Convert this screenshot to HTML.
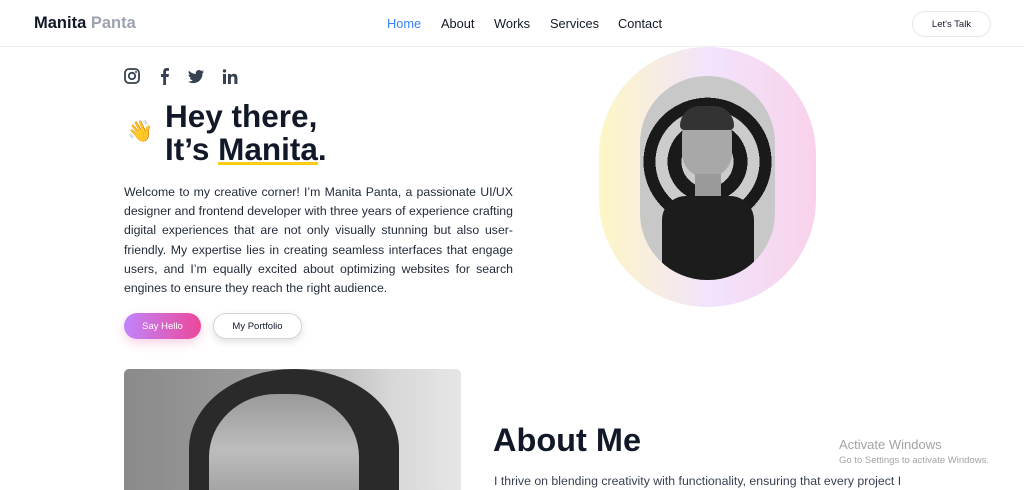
<!DOCTYPE html>
<html><head><meta charset="utf-8"><style>
*{margin:0;padding:0;box-sizing:border-box}
html,body{overflow:hidden}
body{width:1024px;height:490px;overflow:hidden;background:#fff;font-family:"Liberation Sans",Arial,sans-serif;position:relative;color:#111827}
.abs{position:absolute}
.nav{top:0;left:0;width:1024px;height:47px;border-bottom:1px solid #eee}
.logo{left:34px;top:14px;font-size:16.5px;font-weight:bold;color:#111827}
.logo span{color:#9ca3af}
.links a{position:absolute;top:16px;font-size:12.8px;color:#111827;text-decoration:none}
.talk{left:912px;top:11px;width:79px;height:26px;border:1px solid #e5e7eb;border-radius:13px;font-size:9.5px;display:flex;align-items:center;justify-content:center}
h1{position:absolute;left:165px;top:100px;font-size:31.5px;line-height:33px;font-weight:bold;color:#111827}
.u{border-bottom:3px solid #facc15;line-height:26px;display:inline-block}
p.t{position:absolute;left:124px;top:183px;width:389px;font-size:12.3px;line-height:19.2px;text-align:justify;color:#1f2937}
.btn{top:313px;height:26px;border-radius:13px;font-size:9.5px;display:flex;align-items:center;justify-content:center}
</style></head><body>
<div class="abs nav"></div>
<div class="abs logo">Manita <span>Panta</span></div>
<div class="links"><a style="left:387px;color:#3b82f6">Home</a><a style="left:441px">About</a><a style="left:494px">Works</a><a style="left:550px">Services</a><a style="left:618px">Contact</a></div>
<div class="abs talk">Let's Talk</div>
<svg class="abs" style="left:124px;top:68px" width="120" height="18" viewBox="0 0 120 18">
<rect x="1" y="1" width="14" height="14" rx="4" fill="none" stroke="#374151" stroke-width="1.8"/><circle cx="8" cy="8" r="3.2" fill="none" stroke="#374151" stroke-width="1.8"/><circle cx="12" cy="4" r="1" fill="#374151"/>
<path d="M42 17V9h2.5l.5-3h-3V4.2c0-.9.3-1.4 1.5-1.4H45V.2C44.6.1 43.7 0 42.8 0 40.6 0 39.2 1.3 39.2 3.7V6H37v3h2.2v8z" fill="#374151"/>
<path d="M80 3.5c-.6.3-1.2.4-1.9.5.7-.4 1.2-1 1.4-1.8-.6.4-1.3.6-2.1.8-.6-.6-1.5-1-2.4-1-1.8 0-3.3 1.5-3.3 3.3 0 .3 0 .5.1.7-2.7-.1-5.2-1.4-6.8-3.4-.3.5-.4 1-.4 1.7 0 1.1.6 2.1 1.5 2.7-.5 0-1-.2-1.5-.4 0 1.6 1.1 2.9 2.6 3.2-.5.2-1.1.2-1.5.1.4 1.3 1.6 2.3 3.1 2.3-1.1.9-2.6 1.4-4.1 1.4H64c1.5.9 3.200 1.500 5.100 1.500 6.100 0 9.400-5 9.400-9.400v-.4c.6-.5 1.100-1 1.500-1.700z" fill="#374151"/>
<path d="M99 6h3v10h-3zM100.5 1.2a1.7 1.7 0 110 3.4 1.7 1.7 0 010-3.4zM104 6h2.9v1.4c.4-.8 1.4-1.6 2.9-1.6 3.1 0 3.6 2 3.6 4.6V16h-3v-4.9c0-1.2 0-2.7-1.6-2.7s-1.9 1.3-1.9 2.6V16h-3z" fill="#374151"/>
</svg>
<div class="abs" style="left:127px;top:120px;font-size:21px">👋</div>
<h1>Hey there,<br>It’s <span class="u">Manita</span>.</h1>
<p class="t">Welcome to my creative corner! I’m Manita Panta, a passionate UI/UX designer and frontend developer with three years of experience crafting digital experiences that are not only visually stunning but also user-friendly. My expertise lies in creating seamless interfaces that engage users, and I’m equally excited about optimizing websites for search engines to ensure they reach the right audience.</p>
<div class="abs btn" style="left:124px;width:77px;background:linear-gradient(90deg,#c084fc,#ec4899);color:#fff;box-shadow:0 4px 10px rgba(236,72,153,.25)">Say Hello</div>
<div class="abs btn" style="left:213px;width:89px;border:1px solid #d1d5db;color:#111827;box-shadow:0 3px 8px rgba(0,0,0,.12)">My Portfolio</div>
<div class="abs" style="left:599px;top:47px;width:217px;height:260px;border-radius:108px;background:linear-gradient(90deg,#fdf6c5,#f1e4fc 50%,#f9d2ea)"></div>
<div class="abs" style="left:640px;top:76px;width:135px;height:204px;border-radius:67px;overflow:hidden;background:radial-gradient(circle at 50% 42%,#ccc 0 26px,#1a1a1a 26px 40px,#ccc 40px 52px,#1a1a1a 52px 64px,#c8c8c8 64px)">
<div class="abs" style="left:42px;top:36px;width:50px;height:66px;border-radius:25px 25px 28px 28px;background:#a8a8a8"></div>
<div class="abs" style="left:40px;top:30px;width:54px;height:24px;border-radius:27px 27px 6px 6px;background:#333"></div>
<div class="abs" style="left:55px;top:98px;width:26px;height:30px;background:#9a9a9a"></div>
<div class="abs" style="left:22px;top:120px;width:92px;height:90px;border-radius:24px 24px 0 0;background:#1c1c1c"></div>
</div>
<div class="abs" style="left:124px;top:369px;width:337px;height:121px;border-radius:5px 5px 0 0;overflow:hidden;background:linear-gradient(90deg,#8a8a8a,#9a9a9a 35%,#d8d8d8 80%,#e6e6e6)">
<div class="abs" style="left:65px;top:0;width:210px;height:160px;border-radius:50% 50% 0 0;background:#2a2a2a"></div>
<div class="abs" style="left:85px;top:25px;width:150px;height:140px;border-radius:45% 45% 0 0;background:linear-gradient(180deg,#9a9a9a,#bdbdbd 40%,#8a8a8a)"></div>
</div>
<div class="abs" style="left:493px;top:422px;font-size:32.5px;font-weight:bold;color:#111827">About Me</div>
<div class="abs" style="left:494px;top:474px;font-size:12.3px;color:#374151">I thrive on blending creativity with functionality, ensuring that every project I</div>
<div class="abs" style="left:839px;top:437px;font-size:13px;color:#a3a3a3">Activate Windows</div>
<div class="abs" style="left:839px;top:455px;font-size:9.5px;color:#a3a3a3">Go to Settings to activate Windows.</div>
</body></html>
